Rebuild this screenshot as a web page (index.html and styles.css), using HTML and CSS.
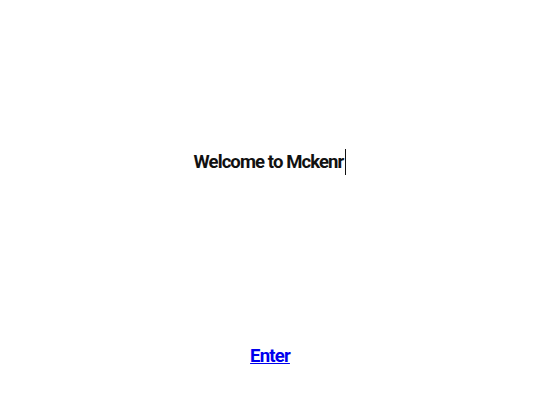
FILE: index.html
```html
<!DOCTYPE html>
<html>
<head>
<meta charset="utf-8">
<link rel="stylesheet" href="styles.css">
</head>
<body>
<main class="page">
  <section class="hero">
    <h1 class="title">Welcome to Mckenr<span class="cursor"></span></h1>
  </section>
  <nav class="actions">
    <a class="enter" href="#">Enter</a>
  </nav>
</main>
</body>
</html>
```
FILE: styles.css
```css
* {
  box-sizing: border-box;
}
html, body {
  margin: 0;
  padding: 0;
  background: #ffffff;
}
.page {
  width: 540px;
  height: 405px;
  display: flex;
  flex-direction: column;
  align-items: center;
  font-family: "Roboto", "Liberation Sans", sans-serif;
}
.hero {
  padding-top: 149px;
  height: 344px;
  display: flex;
  justify-content: center;
  align-items: flex-start;
}
.title {
  margin: 0;
  font-size: 18.5px;
  font-weight: 700;
  color: #111111;
  line-height: 26px;
  letter-spacing: -0.9px;
  display: flex;
  align-items: center;
}
.cursor {
  display: inline-block;
  width: 1.5px;
  height: 26px;
  background: #111111;
  margin-left: 1.5px;
}
.actions {
  padding-top: 0;
}
.enter {
  font-size: 18.5px;
  font-weight: 700;
  color: #0000ee;
  text-decoration: underline;
  letter-spacing: -0.8px;
  line-height: 24px;
}
```
